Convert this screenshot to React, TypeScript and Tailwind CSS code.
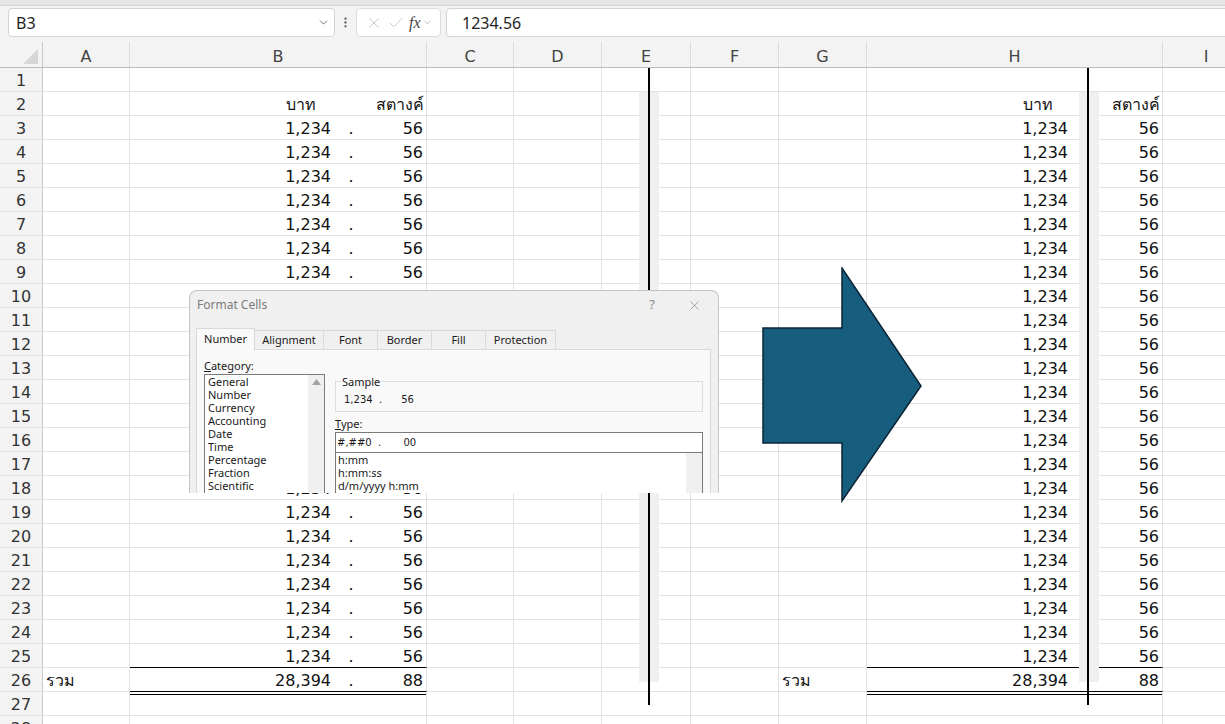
import { ChevronDown, X, Check, EllipsisVertical } from 'lucide-react';

const WIDTHS = ['w-[87px]', 'w-[297px]', 'w-[87px]', 'w-[88px]', 'w-[89px]', 'w-[88px]', 'w-[88px]', 'w-[296px]', 'w-[87px]'];
const LETTERS = ['A', 'B', 'C', 'D', 'E', 'F', 'G', 'H', 'I'];
const ROWS = Array.from({ length: 28 }, (_, i) => i + 1);

const CATEGORIES = ['General', 'Number', 'Currency', 'Accounting', 'Date', 'Time', 'Percentage', 'Fraction', 'Scientific'];
const TYPES = ['h:mm', 'h:mm:ss', 'd/m/yyyy h:mm'];
const TABS = [
    { label: 'Number', w: 'w-[59px]' },
    { label: 'Alignment', w: 'w-[69px]' },
    { label: 'Font', w: 'w-[54px]' },
    { label: 'Border', w: 'w-[54px]' },
    { label: 'Fill', w: 'w-[54px]' },
    { label: 'Protection', w: 'w-[70px]' },
];

const Amount = ({ whole, frac }: { whole: string; frac: string }) => (
    <div className="flex w-full items-end leading-[18px]">
        <span className="w-[201px] shrink-0 text-right">{whole}</span>
        <span className="w-[40px] shrink-0 text-center">.</span>
        <span className="flex-1 pr-[3px] text-right">{frac}</span>
    </div>
);

const Labels = () => (
    <div className="flex w-full items-end leading-[18px]">
        <span className="w-[186px] shrink-0 text-right">บาท</span>
        <span className="flex-1 pr-[2px] text-right">สตางค์</span>
    </div>
);

function cellContent(row: number, col: number) {
    const amountCol = col === 1 || col === 7;
    if (row === 2 && amountCol) return <Labels />;
    if (row >= 3 && row <= 25 && amountCol) return <Amount whole="1,234" frac="56" />;
    if (row === 26 && amountCol) return <Amount whole="28,394" frac="88" />;
    if (row === 26 && (col === 0 || col === 6)) return <span className="pl-[3px] leading-[18px]">รวม</span>;
    if (row === 27 && amountCol) return <div className="mb-auto mt-[2px] h-px w-full bg-black" />;
    return null;
}

function cellBorder(row: number, col: number) {
    const amountCol = col === 1 || col === 7;
    if ((row === 25 || row === 26) && amountCol) return 'border-b-black';
    return '';
}

const FormulaBar = () => (
    <div className="h-[36px] bg-[#f3f3f3] pt-[2px] flex items-start font-['Noto_Sans',sans-serif]">
        <div className="ml-[8px] w-[327px] h-[29px] rounded-[4px] border border-[#d3d3d3] bg-white flex items-center justify-between pl-[7px] pr-[4px]">
            <span className="text-[16px] text-[#1f1f1f]">B3</span>
            <ChevronDown size={13} strokeWidth={1.5} className="text-[#555]" />
        </div>
        <div className="w-[21px] h-[29px] flex items-center justify-center">
            <EllipsisVertical size={13} strokeWidth={2.2} className="text-[#555]" />
        </div>
        <div className="w-[85px] h-[29px] rounded-[4px] border border-[#dcdcdc] bg-white flex items-center pl-[8px] gap-[4px]">
            <X size={18} strokeWidth={1} className="text-[#b4b4b4]" />
            <Check size={18} strokeWidth={1} className="text-[#b4b4b4]" />
            <span className="font-['Liberation_Serif',serif] italic text-[16px] text-[#444]">fx</span>
            <ChevronDown size={11} strokeWidth={1.3} className="text-[#888] -ml-[3px]" />
        </div>
        <div className="ml-[5px] flex-1 -mr-[10px] h-[29px] rounded-[4px] border border-[#d3d3d3] bg-white flex items-center pl-[15px]">
            <span className="text-[16px] text-[#1f1f1f]">1234.56</span>
        </div>
    </div>
);

const HeaderRow = () => (
    <div className="flex h-[26px] bg-[#f3f3f3] border-b border-[#bdbdbd]">
        <div className="w-[43px] shrink-0 border-r border-[#c9c9c9] relative flex items-end justify-end pr-[4px] pb-[3px]">
            <svg width="15" height="15" viewBox="0 0 15 15">
                <polygon points="15,0 15,15 0,15" fill="#d6d6d6" />
            </svg>
        </div>
        {LETTERS.map((l, i) => (
            <div key={l} className={`${WIDTHS[i]} shrink-0 border-r border-[#dcdcdc] flex items-center justify-center pt-[4px] text-[16px] text-[#444]`}>
                {l}
            </div>
        ))}
    </div>
);

const Dialog = () => (
    <div className="absolute left-[189px] top-[290px] w-[530px] h-[203px] overflow-hidden rounded-t-[8px] border border-b-0 border-[#c4c4c4] bg-[#f0f0f0] font-['Noto_Sans',sans-serif] text-[11px] text-[#1a1a1a]">
        <div className="h-[28px] flex items-center justify-between pl-[7px] pr-[16px]">
            <span className="text-[12px] text-[#7b7b7b]">Format Cells</span>
            <div className="flex items-center gap-[32px] text-[#8a8a8a]">
                <span className="text-[13px]">?</span>
                <X size={15} strokeWidth={1.2} />
            </div>
        </div>
        <div className="mt-[9px] ml-[6px] flex items-end h-[21px]">
            {TABS.map((t, i) => (
                <div
                    key={t.label}
                    className={`${t.w} shrink-0 flex items-center justify-center border border-[#d9d9d9] ${i === 0 ? 'h-[22px] bg-[#f9f9f9] border-b-0 relative z-10 -mb-px' : 'h-[19px] bg-[#f0f0f0] border-l-0 border-b-0'}`}
                >
                    {t.label}
                </div>
            ))}
        </div>
        <div className="ml-[6px] w-[515px] h-[200px] border border-[#d9d9d9] bg-[#f9f9f9] flex pl-[7px]">
            <div className="w-[121px] shrink-0 pt-[8px]">
                <div className="leading-[15px]"><span className="underline">C</span>ategory:</div>
                <div className="mt-[1px] h-[160px] border border-[#7a7a7a] bg-white flex">
                    <div className="flex-1 pl-[3px] leading-[13px]">
                        {CATEGORIES.map(c => <div key={c}>{c}</div>)}
                    </div>
                    <div className="w-[16px] bg-[#f0f0f0] flex justify-center pt-[4px]">
                        <svg width="9" height="6" viewBox="0 0 9 6"><polygon points="4.5,0 9,6 0,6" fill="#a3a3a3" /></svg>
                    </div>
                </div>
            </div>
            <div className="ml-[10px] w-[368px] shrink-0 pt-[25px]">
                <fieldset className="h-[37px] border border-[#dcdcdc] px-[5px]">
                    <legend className="px-[1px] text-[11px] leading-[13px]">Sample</legend>
                    <div className="pl-[3px] pt-[4px] whitespace-pre font-['DejaVu_Sans',sans-serif] text-[10px]">1,234  .      56</div>
                </fieldset>
                <div className="mt-[5px] leading-[14px]"><span className="underline">T</span>ype:</div>
                <div className="mt-[1px] h-[21px] border border-[#7a7a7a] bg-white flex items-center pl-[1px] whitespace-pre font-['DejaVu_Sans',sans-serif] text-[10px]">#,##0  .       00</div>
                <div className="h-[60px] border border-t-0 border-[#7a7a7a] bg-white flex">
                    <div className="flex-1 pl-[2px] leading-[13px]">
                        {TYPES.map(t => <div key={t}>{t}</div>)}
                    </div>
                    <div className="w-[16px] bg-[#f0f0f0]" />
                </div>
            </div>
        </div>
    </div>
);

export default function App() {
    return (
        <div className="relative w-[1225px] h-[724px] overflow-hidden bg-white font-['DejaVu_Sans','Noto_Sans',sans-serif] text-[#111]">
            <div className="h-[6px] bg-[#e6e6e6] border-b border-[#d6d6d6]" />
            <FormulaBar />
            <HeaderRow />
            {ROWS.map(r => (
                <div key={r} className="flex h-[24px]">
                    <div className="w-[43px] shrink-0 bg-[#f3f3f3] border-r border-[#c9c9c9] border-b border-b-[#e1e1e1] flex items-center justify-center pt-[3px] text-[16px] text-[#333]">
                        {r}
                    </div>
                    {LETTERS.map((l, c) => (
                        <div key={l} className={`${WIDTHS[c]} shrink-0 border-r border-b border-[#e1e1e1] ${cellBorder(r, c)} flex items-end pb-[1px] overflow-hidden text-[16px]`}>
                            {cellContent(r, c)}
                        </div>
                    ))}
                </div>
            ))}

            {/* shaded strips and divider lines drawn over the sheet */}
            <div className="absolute left-[639px] top-[92px] w-[20px] h-[590px] bg-[#f0f0f0]" />
            <div className="absolute left-[1079px] top-[92px] w-[20px] h-[590px] bg-[#f0f0f0]" />
            <div className="absolute left-[648px] top-[68px] w-[2px] h-[637px] bg-black" />
            <div className="absolute left-[1087px] top-[68px] w-[2px] h-[637px] bg-black" />

            {/* arrow shape */}
            <svg className="absolute left-[762px] top-[267px]" width="162" height="236" viewBox="0 0 162 236">
                <polygon points="1,61 80,61 80,1 159,119 80,234 80,176 1,176" fill="#175d7e" stroke="#0b2536" strokeWidth="1.5" />
            </svg>

            <Dialog />
        </div>
    );
}
